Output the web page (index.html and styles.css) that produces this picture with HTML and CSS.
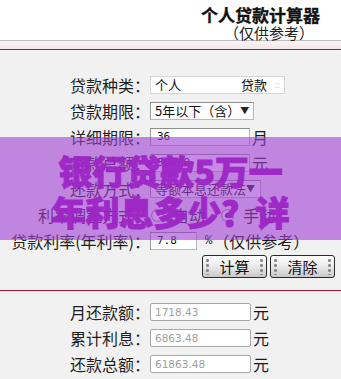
FILE: index.html
```html
<!DOCTYPE html>
<html lang="zh-CN">
<head>
<meta charset="utf-8">
<title>个人贷款计算器</title>
<link rel="stylesheet" href="styles.css">
</head>
<body>
<div class="page">
  <header class="top">
    <div class="title">个人贷款计算器</div>
    <div class="sub">（仅供参考）</div>
  </header>
  <div class="rule"></div>
  <main class="calc">
    <div class="form">
      <div class="row">
        <span class="lbl">贷款种类：</span>
        <div class="box w135 spread"><span>个人</span><span class="tail">贷款<i class="dotmark">::</i></span></div>
      </div>
      <div class="row">
        <span class="lbl">贷款期限：</span>
        <div class="box w104 sel"><span>5年以下（含）</span><span class="arrow">▼</span></div>
      </div>
      <div class="row">
        <span class="lbl">详细期限：</span>
        <div class="cell"><div class="box w100 num">36</div><span class="unit">月</span></div>
      </div>
      <div class="row">
        <span class="lbl">贷款总额：</span>
        <div class="cell"><div class="box w100 num">50000</div><span class="unit">元</span></div>
      </div>
      <div class="row">
        <span class="lbl">还款方式：</span>
        <div class="box w110 sel"><span>等额本息还款法</span><span class="arrow">▼</span></div>
      </div>
      <div class="row">
        <span class="lbl">利率调整方式：</span>
        <div class="cell radios">
          <span class="radio"></span><span class="rtext">自动</span>
          <span class="radio on"></span><span class="rtext">手动</span>
        </div>
      </div>
      <div class="row">
        <span class="lbl">贷款利率(年利率)：</span>
        <div class="cell"><div class="box w47 num">7.8</div><span class="pct">%</span><span class="note">（仅供参考）</span></div>
      </div>
    </div>
    <div class="buttons">
      <button class="btn" type="button"><span class="grip"></span><span>计算</span><span class="grip"></span></button>
      <button class="btn" type="button"><span class="grip"></span><span>清除</span><span class="grip"></span></button>
    </div>
    <div class="rule2"></div>
    <div class="results">
      <div class="row">
        <span class="lbl">月还款额：</span>
        <div class="cell"><div class="box w101 out">1718.43</div><span class="unit">元</span></div>
      </div>
      <div class="row">
        <span class="lbl">累计利息：</span>
        <div class="cell"><div class="box w101 out">6863.48</div><span class="unit">元</span></div>
      </div>
      <div class="row">
        <span class="lbl">还款总额：</span>
        <div class="cell"><div class="box w101 out">61863.48</div><span class="unit">元</span></div>
      </div>
    </div>
  </main>
  <div class="promo">
    <div class="promo-line">银行贷款5万一</div>
    <div class="promo-line">年利息多少？详</div>
  </div>
</div>
</body>
</html>
```
FILE: styles.css
```css
* { box-sizing: border-box; }
html, body { margin: 0; padding: 0; }
body {
  width: 341px;
  height: 379px;
  overflow: hidden;
  background: #fff;
  font-family: "Noto Sans CJK SC", "Liberation Sans", sans-serif;
  color: #1a1a1a;
}
.page { position: relative; width: 341px; height: 379px; overflow: hidden; }

.top {
  height: 40px;
  display: flex;
  flex-direction: column;
  align-items: flex-end;
  padding: 5px 21px 0 0;
  background: #fff;
}
.title { font-size: 17px; font-weight: 700; line-height: 20px; color: #111; -webkit-text-stroke: 0.3px #111; }
.sub { font-size: 15px; line-height: 15px; margin-right: 6px; color: #222; }

.rule {
  height: 10px;
  border-top: 1px solid #bdbdbd;
  border-bottom: 1px solid #9c1d30;
  background: linear-gradient(#f8f4f4, #f4e6e8);
}

.calc { background: #f1f1f1; height: 329px; }
.form { padding-top: 22px; }

.row {
  display: grid;
  grid-template-columns: 150px 1fr;
  align-items: center;
  height: 26px;
}
.lbl {
  text-align: right;
  font-size: 16px;
  line-height: 18px;
  white-space: nowrap;
  color: #1e1e1e;
}
.cell { display: flex; align-items: center; }

.box {
  height: 18px;
  background: #fff;
  border: 1px solid #b9b9b9;
  border-top-color: #8e8e8e;
  border-left-color: #9a9a9a;
  font-size: 13px;
  line-height: 16px;
  padding: 0 4px;
  display: flex;
  align-items: center;
  white-space: nowrap;
  color: #111;
}
.w135 { width: 135px; }
.w104 { width: 104px; }
.w110 { width: 111px; }
.w100 { width: 100px; }
.w101 { width: 101px; }
.w47 { width: 47px; }
.spread { justify-content: space-between; border-color: #d6d6d6; }
.tail { display: flex; align-items: center; gap: 8px; }
.dotmark { font-style: normal; color: #ccc; font-size: 9px; }
.sel { justify-content: space-between; padding-right: 6px; }
.arrow { font-size: 9px; color: #222; }
.num { font-family: "DejaVu Sans Mono", "Liberation Mono", monospace; font-size: 11px; padding-left: 6px; }
.unit { font-size: 16px; margin-left: 2px; line-height: 18px; }
.pct { font-family: "Liberation Mono", monospace; font-size: 12px; margin-left: 8px; }
.note { font-size: 16px; line-height: 18px; margin-left: 1px; }

.radios { gap: 0; }
.radio {
  width: 13px; height: 13px;
  border-radius: 50%;
  border: 1px solid #8a8a8a;
  background: radial-gradient(circle, #fff 40%, #dcdcdc 100%);
  margin-left: 1px;
}
.radio.on { margin-left: 16px; background: radial-gradient(circle, #333 30%, #fff 36%, #ddd 100%); }
.rtext { font-size: 16px; margin-left: 9px; line-height: 18px; }

.buttons {
  display: flex;
  justify-content: flex-end;
  gap: 3px;
  padding-right: 6px;
  margin-top: 1px;
  height: 23px;
}
.btn {
  width: 65px;
  height: 23px;
  padding: 0 3px;
  border: 1px solid #2a2a2a;
  border-radius: 3px;
  background: linear-gradient(#ffffff, #ececec 45%, #c9c9c9);
  font-family: "Noto Sans CJK SC", sans-serif;
  font-size: 15px;
  line-height: 19px;
  color: #111;
  display: flex;
  align-items: center;
  justify-content: space-between;
}
.grip {
  width: 3px;
  height: 17px;
  background: radial-gradient(circle, #888 45%, transparent 55%) 0 0 / 3px 5px repeat-y;
}

.rule2 {
  margin-top: 12px;
  height: 2px;
  border-top: 1px solid #9c2035;
  background: #f3dfe2;
}
.results { padding-top: 7px; }
.out {
  border: 1px solid #a8a8a8;
  border-radius: 2px;
  font-family: "DejaVu Sans", sans-serif;
  font-size: 10.5px;
  color: #a0a0a0;
  padding-left: 4px;
}

.promo {
  position: absolute;
  left: 0;
  top: 137px;
  width: 341px;
  height: 103px;
  background: rgba(160, 62, 210, 0.6);
  display: flex;
  flex-direction: column;
  align-items: center;
  justify-content: center;
  padding-top: 4px;
}
.promo-line {
  font-size: 34px;
  font-weight: 900;
  line-height: 41px;
  color: #9e24c6;
  -webkit-text-stroke: 1px #9e24c6;
  opacity: 0.94;
  white-space: nowrap;
}
```
